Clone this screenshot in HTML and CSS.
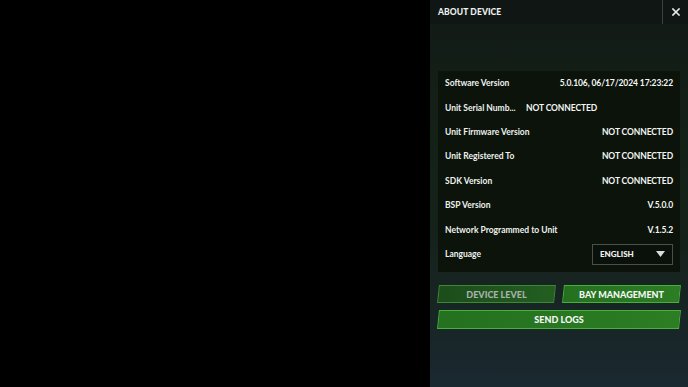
FILE: index.html
```html
<!DOCTYPE html>
<html lang="en">
   <head>
      <meta charset="UTF-8">
      <meta name="viewport" content="width=device-width, initial-scale=1.0">
      <title>About Device</title>
      <link rel="stylesheet" href="styles.css">
   </head>

   <body>
      <div class="screen">
         <div class="stage"></div>

         <aside class="drawer">
            <!------------------HEADER---------------->
            <div class="drawer-head">
               <span class="drawer-title">ABOUT DEVICE</span>
               <button type="button" class="close-btn" aria-label="Close">
                  <svg width="8" height="8" viewBox="0 0 8 8">
                     <path d="M1 1 L7 7 M7 1 L1 7" stroke="#e8ecea" stroke-width="1.6" stroke-linecap="square"/>
                  </svg>
               </button>
            </div>

            <div class="drawer-body">
               <!---------------INFO CARD--------------->
               <div class="info-card">
                  <div class="info-row">
                     <span class="info-label">Software Version</span>
                     <span class="info-value">5.0.106, 06/17/2024 17:23:22</span>
                  </div>
                  <div class="info-row info-row-left">
                     <span class="info-label info-label-clip">Unit Serial Numb...</span>
                     <span class="info-value">NOT CONNECTED</span>
                  </div>
                  <div class="info-row">
                     <span class="info-label">Unit Firmware Version</span>
                     <span class="info-value">NOT CONNECTED</span>
                  </div>
                  <div class="info-row">
                     <span class="info-label">Unit Registered To</span>
                     <span class="info-value">NOT CONNECTED</span>
                  </div>
                  <div class="info-row">
                     <span class="info-label">SDK Version</span>
                     <span class="info-value">NOT CONNECTED</span>
                  </div>
                  <div class="info-row">
                     <span class="info-label">BSP Version</span>
                     <span class="info-value">V.5.0.0</span>
                  </div>
                  <div class="info-row">
                     <span class="info-label">Network Programmed to Unit</span>
                     <span class="info-value">V.1.5.2</span>
                  </div>
                  <div class="info-row">
                     <span class="info-label">Language</span>
                     <div class="select">
                        <span>ENGLISH</span>
                        <svg width="9" height="6" viewBox="0 0 9 6">
                           <path d="M0 0 H9 L4.5 6 Z" fill="#d8dcda"/>
                        </svg>
                     </div>
                  </div>
               </div>

               <!----------------ACTIONS---------------->
               <div class="actions">
                  <button type="button" class="action action-muted">DEVICE LEVEL</button>
                  <button type="button" class="action">BAY MANAGEMENT</button>
                  <button type="button" class="action action-wide">SEND LOGS</button>
               </div>
            </div>
         </aside>
      </div>
   </body>
</html>
```

FILE: styles.css
```css
*{
   box-sizing: border-box;
   margin: 0;
   padding: 0;
}

body{
   background: #000;
   font-family: "Lato", "Open Sans", sans-serif;
   color: #f2f4f3;
}

.screen{
   display: flex;
   width: 688px;
   height: 387px;
}

.stage{
   flex: 1;
   background: #000;
}

.drawer{
   width: 258px;
   display: flex;
   flex-direction: column;
   background: linear-gradient(180deg, #121a16 0%, #142117 35%, #15221a 60%, #1a2830 100%);
}

.drawer-head{
   height: 24px;
   display: flex;
   align-items: center;
   justify-content: space-between;
   background: #0f1614;
}

.drawer-title{
   padding-left: 8px;
   font-size: 8.5px;
   font-weight: 900;
   letter-spacing: 0.1px;
   color: #eef1ef;
}

.close-btn{
   width: 26px;
   height: 24px;
   display: flex;
   align-items: center;
   justify-content: center;
   background: transparent;
   border: none;
   border-left: 1px solid #3a403d;
}

.drawer-body{
   padding: 47px 8px 0 8px;
}

.info-card{
   height: 201px;
   padding: 0 7px 0 7px;
   background: #0b130a;
   display: flex;
   flex-direction: column;
}

.info-row{
   height: 24.4px;
   display: flex;
   align-items: center;
   justify-content: space-between;
   font-size: 8.5px;
   font-weight: 700;
}

.info-row-left{
   justify-content: flex-start;
   gap: 14px;
}

.info-label{
   color: #eef1ef;
}

.info-label-clip{
   width: 67px;
   white-space: nowrap;
}

.info-value{
   color: #f4f6f5;
   letter-spacing: -0.1px;
}

.select{
   width: 81px;
   height: 21px;
   margin-top: 1px;
   display: flex;
   align-items: center;
   justify-content: space-between;
   padding: 0 7px 0 7px;
   border: 1px solid #4a4f4c;
   background: #0a100a;
   font-size: 8px;
   font-weight: 900;
}

.actions{
   display: grid;
   grid-template-columns: 1fr 1fr;
   column-gap: 8px;
   row-gap: 7px;
   margin-top: 13px;
}

.action{
   position: relative;
   height: 18px;
   border: none;
   background: transparent;
   font-family: "Lato", sans-serif;
   font-size: 9px;
   font-weight: 900;
   color: #f5f7f5;
   z-index: 0;
}

.action::before{
   content: "";
   position: absolute;
   inset: 0;
   z-index: -1;
   background: linear-gradient(90deg, #24701f 0%, #2c7d24 100%);
   border: 1px solid #46b03a;
   transform: skewX(-6deg);
}

.action-muted{
   color: #a9b0ad;
}

.action-muted::before{
   background: linear-gradient(90deg, #1c4d1b 0%, #235e20 100%);
   border-color: #3b8a33;
}

.action-wide{
   grid-column: 1 / 3;
   height: 19px;
}
```
